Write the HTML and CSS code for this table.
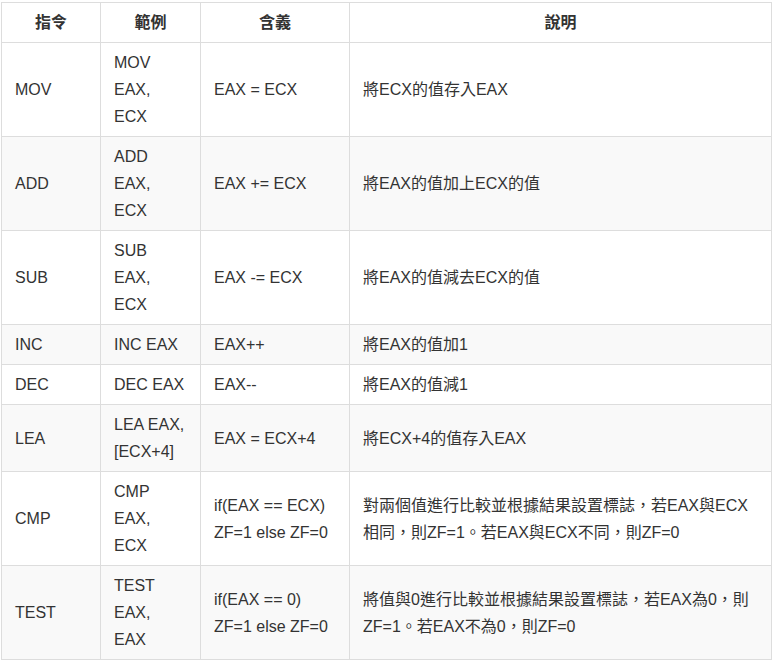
FILE: index.html
```html
<!DOCTYPE html>
<html lang="zh-Hant">
<head>
<meta charset="utf-8">
<link rel="stylesheet" href="styles.css">
</head>
<body>
<div class="wrap">
<table class="asm">
  <colgroup>
    <col class="c1"><col class="c2"><col class="c3"><col class="c4">
  </colgroup>
  <thead>
    <tr><th>指令</th><th>範例</th><th>含義</th><th>說明</th></tr>
  </thead>
  <tbody>
    <tr><td>MOV</td><td class="ex">MOV EAX, ECX</td><td>EAX = ECX</td><td>將ECX的值存入EAX</td></tr>
    <tr><td>ADD</td><td class="ex">ADD EAX, ECX</td><td>EAX += ECX</td><td>將EAX的值加上ECX的值</td></tr>
    <tr><td>SUB</td><td class="ex">SUB EAX, ECX</td><td>EAX -= ECX</td><td>將EAX的值減去ECX的值</td></tr>
    <tr><td>INC</td><td class="ex">INC EAX</td><td>EAX++</td><td>將EAX的值加1</td></tr>
    <tr><td>DEC</td><td class="ex">DEC EAX</td><td>EAX--</td><td>將EAX的值減1</td></tr>
    <tr><td>LEA</td><td class="ex">LEA EAX, [ECX+4]</td><td>EAX = ECX+4</td><td>將ECX+4的值存入EAX</td></tr>
    <tr><td>CMP</td><td class="ex">CMP EAX, ECX</td><td>if(EAX == ECX) ZF=1 else ZF=0</td><td>對兩個值進行比較並根據結果設置標誌，若EAX與ECX相同，則ZF=1。若EAX與ECX不同，則ZF=0</td></tr>
    <tr><td>TEST</td><td class="ex">TEST EAX, EAX</td><td>if(EAX == 0) ZF=1 else ZF=0</td><td>將值與0進行比較並根據結果設置標誌，若EAX為0，則ZF=1。若EAX不為0，則ZF=0</td></tr>
  </tbody>
</table>
</div>
</body>
</html>
```

FILE: styles.css
```css
html, body {
  margin: 0;
  padding: 0;
  background: #fff;
}
.wrap {
  padding: 2px 0 0 1px;
}
.asm {
  border-collapse: collapse;
  table-layout: fixed;
  width: 770px;
  font-family: "Liberation Sans", Arial, "Noto Sans CJK TC", sans-serif;
  font-size: 16px;
  line-height: 27px;
  color: #333;
}
.c1 { width: 99px; }
.c2 { width: 100px; }
.c3 { width: 149px; }
.c4 { width: 422px; }
.asm th, .asm td {
  border: 1px solid #ddd;
  padding: 6px 13px;
  vertical-align: middle;
  text-align: left;
}
.asm td.ex {
  padding-right: 14px;
}
.asm th {
  font-weight: bold;
  text-align: center;
}
.asm tbody tr:nth-child(even) td {
  background: #f9f9f9;
}
```
